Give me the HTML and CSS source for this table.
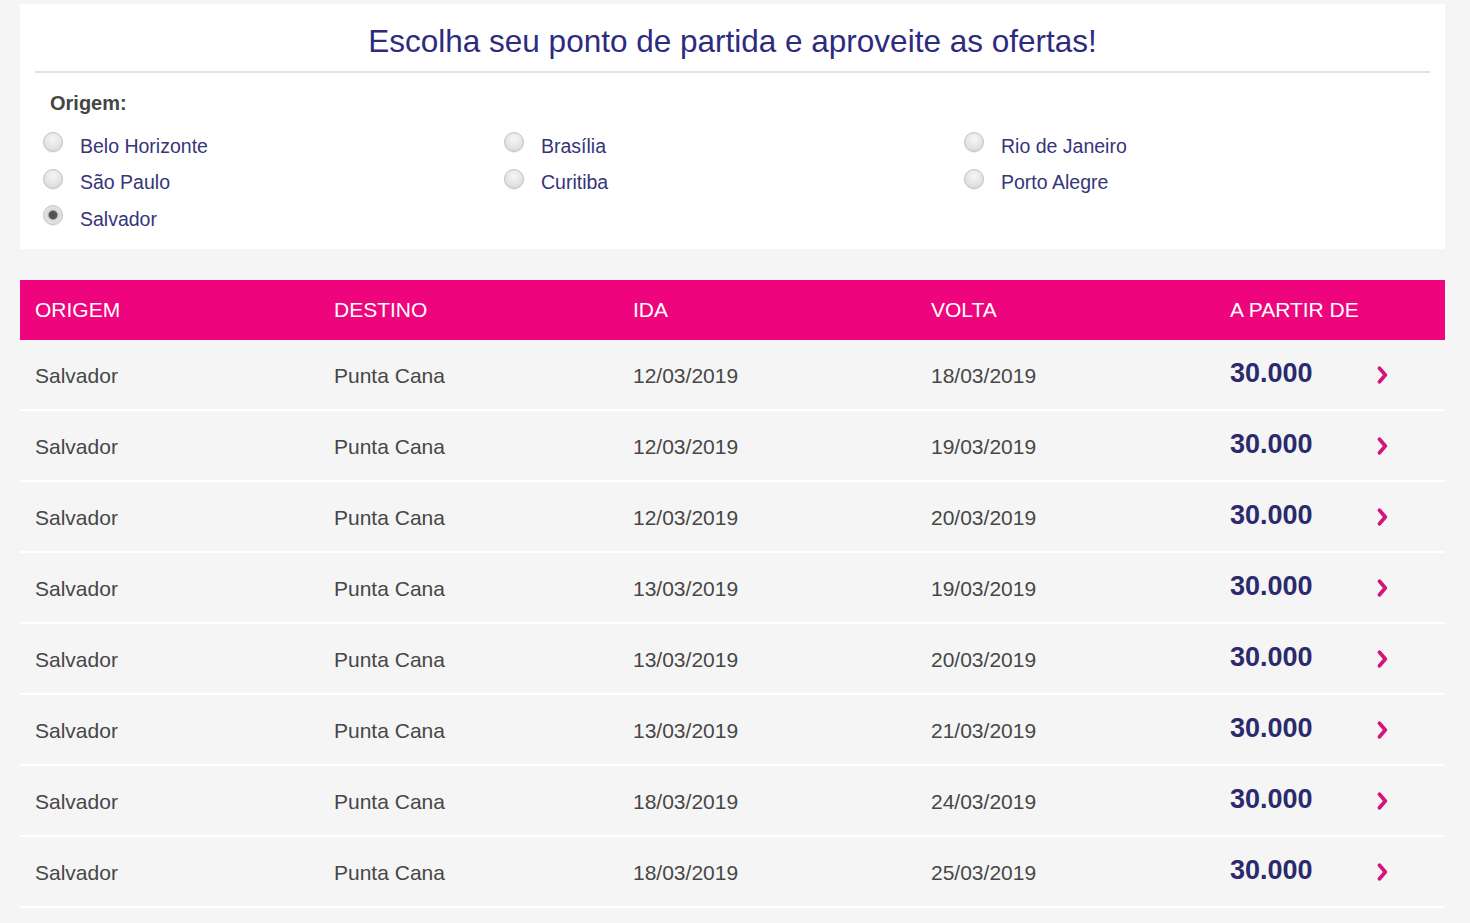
FILE: index.html
```html
<!DOCTYPE html>
<html lang="pt-BR">
<head>
<meta charset="utf-8">
<title>Ofertas</title>
<link rel="stylesheet" href="styles.css">
</head>
<body>
<div class="page">
  <section class="card">
    <h1 class="title">Escolha seu ponto de partida e aproveite as ofertas!</h1>
    <div class="origin-label">Origem:</div>
    <div class="radios">
      <label class="radio"><span class="dot"></span><span class="rlabel">Belo Horizonte</span></label>
      <label class="radio"><span class="dot"></span><span class="rlabel">Brasília</span></label>
      <label class="radio"><span class="dot"></span><span class="rlabel">Rio de Janeiro</span></label>
      <label class="radio"><span class="dot"></span><span class="rlabel">São Paulo</span></label>
      <label class="radio"><span class="dot"></span><span class="rlabel">Curitiba</span></label>
      <label class="radio"><span class="dot"></span><span class="rlabel">Porto Alegre</span></label>
      <label class="radio"><span class="dot checked"></span><span class="rlabel">Salvador</span></label>
    </div>
  </section>

  <section class="table">
    <div class="row head">
      <div class="cell">ORIGEM</div>
      <div class="cell">DESTINO</div>
      <div class="cell">IDA</div>
      <div class="cell">VOLTA</div>
      <div class="cell">A PARTIR DE</div>
    </div>
    <div class="row">
      <div class="cell">Salvador</div><div class="cell">Punta Cana</div><div class="cell">12/03/2019</div><div class="cell">18/03/2019</div>
      <div class="cell pricecell"><span class="price">30.000</span><svg class="chev" width="11" height="18" viewBox="0 0 11 18"><polyline points="2.5,2.2 8.3,9 2.5,15.8" fill="none" stroke="#d4157c" stroke-width="3.7" stroke-linecap="round" stroke-linejoin="round"/></svg></div>
    </div>
    <div class="row">
      <div class="cell">Salvador</div><div class="cell">Punta Cana</div><div class="cell">12/03/2019</div><div class="cell">19/03/2019</div>
      <div class="cell pricecell"><span class="price">30.000</span><svg class="chev" width="11" height="18" viewBox="0 0 11 18"><polyline points="2.5,2.2 8.3,9 2.5,15.8" fill="none" stroke="#d4157c" stroke-width="3.7" stroke-linecap="round" stroke-linejoin="round"/></svg></div>
    </div>
    <div class="row">
      <div class="cell">Salvador</div><div class="cell">Punta Cana</div><div class="cell">12/03/2019</div><div class="cell">20/03/2019</div>
      <div class="cell pricecell"><span class="price">30.000</span><svg class="chev" width="11" height="18" viewBox="0 0 11 18"><polyline points="2.5,2.2 8.3,9 2.5,15.8" fill="none" stroke="#d4157c" stroke-width="3.7" stroke-linecap="round" stroke-linejoin="round"/></svg></div>
    </div>
    <div class="row">
      <div class="cell">Salvador</div><div class="cell">Punta Cana</div><div class="cell">13/03/2019</div><div class="cell">19/03/2019</div>
      <div class="cell pricecell"><span class="price">30.000</span><svg class="chev" width="11" height="18" viewBox="0 0 11 18"><polyline points="2.5,2.2 8.3,9 2.5,15.8" fill="none" stroke="#d4157c" stroke-width="3.7" stroke-linecap="round" stroke-linejoin="round"/></svg></div>
    </div>
    <div class="row">
      <div class="cell">Salvador</div><div class="cell">Punta Cana</div><div class="cell">13/03/2019</div><div class="cell">20/03/2019</div>
      <div class="cell pricecell"><span class="price">30.000</span><svg class="chev" width="11" height="18" viewBox="0 0 11 18"><polyline points="2.5,2.2 8.3,9 2.5,15.8" fill="none" stroke="#d4157c" stroke-width="3.7" stroke-linecap="round" stroke-linejoin="round"/></svg></div>
    </div>
    <div class="row">
      <div class="cell">Salvador</div><div class="cell">Punta Cana</div><div class="cell">13/03/2019</div><div class="cell">21/03/2019</div>
      <div class="cell pricecell"><span class="price">30.000</span><svg class="chev" width="11" height="18" viewBox="0 0 11 18"><polyline points="2.5,2.2 8.3,9 2.5,15.8" fill="none" stroke="#d4157c" stroke-width="3.7" stroke-linecap="round" stroke-linejoin="round"/></svg></div>
    </div>
    <div class="row">
      <div class="cell">Salvador</div><div class="cell">Punta Cana</div><div class="cell">18/03/2019</div><div class="cell">24/03/2019</div>
      <div class="cell pricecell"><span class="price">30.000</span><svg class="chev" width="11" height="18" viewBox="0 0 11 18"><polyline points="2.5,2.2 8.3,9 2.5,15.8" fill="none" stroke="#d4157c" stroke-width="3.7" stroke-linecap="round" stroke-linejoin="round"/></svg></div>
    </div>
    <div class="row">
      <div class="cell">Salvador</div><div class="cell">Punta Cana</div><div class="cell">18/03/2019</div><div class="cell">25/03/2019</div>
      <div class="cell pricecell"><span class="price">30.000</span><svg class="chev" width="11" height="18" viewBox="0 0 11 18"><polyline points="2.5,2.2 8.3,9 2.5,15.8" fill="none" stroke="#d4157c" stroke-width="3.7" stroke-linecap="round" stroke-linejoin="round"/></svg></div>
    </div>
  </section>
</div>
</body>
</html>
```

FILE: styles.css
```css
html, body {
  margin: 0;
  padding: 0;
  background: #f5f5f5;
  font-family: "Liberation Sans", Arial, sans-serif;
}

.page {
  width: 1425px;
  margin-left: 20px;
  padding-top: 4px;
}

.card {
  background: #ffffff;
  padding: 0 15px 18px 15px;
}

.title {
  margin: 0;
  padding: 18px 0 11px 0;
  font-size: 31.5px;
  line-height: 38px;
  font-weight: normal;
  color: #2d2b7e;
  text-align: center;
  border-bottom: 2px solid #e2e2e2;
}

.origin-label {
  margin: 18px 0 0 15px;
  font-size: 20px;
  line-height: 24px;
  font-weight: bold;
  color: #454545;
}

.radios {
  margin: 19px 0 0 8px;
  display: grid;
  grid-template-columns: 461px 460px 1fr;
  row-gap: 12.5px;
}

.radio {
  display: flex;
  align-items: center;
  height: 24px;
}

.dot {
  box-sizing: border-box;
  width: 20px;
  height: 20px;
  border-radius: 50%;
  border: 1px solid #c2c2c2;
  background: radial-gradient(circle at 50% 35%, #f6f6f6 0%, #e4e4e4 55%, #d2d2d2 100%);
  box-shadow: 0 1px 1px rgba(0,0,0,0.08);
  position: relative;
  top: -4px;
  flex: none;
}

.dot.checked {
  background: radial-gradient(circle, #4d4d4d 0, #5a5a5a 4px, #d6d6d6 5px, #e6e6e6 70%, #d0d0d0 100%);
}

.rlabel {
  margin-left: 17px;
  font-size: 19.5px;
  color: #36357a;
}

.table {
  margin-top: 31px;
}

.row {
  display: grid;
  grid-template-columns: 299px 299px 298px 299px 1fr;
  align-items: center;
  height: 67px;
  padding-top: 2px;
  border-bottom: 2px solid #ffffff;
  font-size: 21px;
  color: #474747;
  background: #f5f5f5;
}

.row.head {
  height: 60px;
  padding-top: 0;
  border-bottom: none;
  background: #ee047d;
  color: #ffffff;
}

.cell {
  padding-left: 15px;
}

.pricecell {
  display: flex;
  align-items: center;
}

.price {
  width: 147px;
  font-size: 27px;
  font-weight: bold;
  color: #2a2a6c;
  position: relative;
  top: -2px;
}

.chev {
  display: block;
  position: relative;
  top: -1px;
}
```
